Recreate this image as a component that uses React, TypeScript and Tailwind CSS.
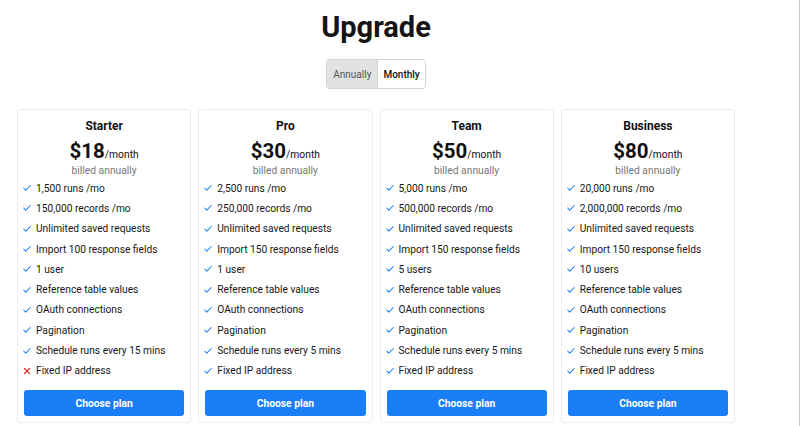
import { Check, X } from "lucide-react";

interface Plan {
  name: string;
  price: number;
  features: string[];
  ipIncluded: boolean;
}

const plans: Plan[] = [
  {
    name: "Starter",
    price: 18,
    features: [
      "1,500 runs /mo",
      "150,000 records /mo",
      "Unlimited saved requests",
      "Import 100 response fields",
      "1 user",
      "Reference table values",
      "OAuth connections",
      "Pagination",
      "Schedule runs every 15 mins",
    ],
    ipIncluded: false,
  },
  {
    name: "Pro",
    price: 30,
    features: [
      "2,500 runs /mo",
      "250,000 records /mo",
      "Unlimited saved requests",
      "Import 150 response fields",
      "1 user",
      "Reference table values",
      "OAuth connections",
      "Pagination",
      "Schedule runs every 5 mins",
    ],
    ipIncluded: true,
  },
  {
    name: "Team",
    price: 50,
    features: [
      "5,000 runs /mo",
      "500,000 records /mo",
      "Unlimited saved requests",
      "Import 150 response fields",
      "5 users",
      "Reference table values",
      "OAuth connections",
      "Pagination",
      "Schedule runs every 5 mins",
    ],
    ipIncluded: true,
  },
  {
    name: "Business",
    price: 80,
    features: [
      "20,000 runs /mo",
      "2,000,000 records /mo",
      "Unlimited saved requests",
      "Import 150 response fields",
      "10 users",
      "Reference table values",
      "OAuth connections",
      "Pagination",
      "Schedule runs every 5 mins",
    ],
    ipIncluded: true,
  },
];

function Feature({ text, ok = true }: { text: string; ok?: boolean }) {
  return (
    <li className="-ml-[2px] flex h-[20.33px] items-center gap-[4px]">
      {ok ? (
        <Check className="h-[10px] w-[10px] shrink-0 text-[#1a7ef7]" strokeWidth={2.5} />
      ) : (
        <X className="h-[10px] w-[10px] shrink-0 text-[#e8322d]" strokeWidth={3} />
      )}
      <span className="whitespace-nowrap">{text}</span>
    </li>
  );
}

function PlanCard({ plan }: { plan: Plan }) {
  return (
    <div className="flex flex-col rounded-[4px] border border-[#ececec] bg-white px-[6px] pt-[6px] pb-[6px]">
      <h2 className="text-center text-[12px] leading-[20px] font-bold text-[#111]">{plan.name}</h2>
      <div className="mt-[2px] flex h-[26px] items-baseline justify-center leading-[26px] text-[#111]">
        <span className="text-[20.5px] font-bold">${plan.price}</span>
        <span className="text-[10.3px]">/month</span>
      </div>
      <div className="text-center text-[10.3px] leading-[14px] text-[#777]">billed annually</div>
      <ul className="text-[10.2px] text-[#161616]">
        {plan.features.map((f) => (
          <Feature key={f} text={f} />
        ))}
        <Feature text="Fixed IP address" ok={plan.ipIncluded} />
      </ul>
      <button className="mt-[9px] h-[26px] rounded-[3px] bg-[#1a7ef7] text-[10.3px] font-bold text-white">
        Choose plan
      </button>
    </div>
  );
}

export default function App() {
  return (
    <div
      className="h-[426px] w-[800px] overflow-hidden border-r border-[#c8c8c8] bg-white text-[#1e1e1e]"
      style={{ fontFamily: "Roboto, 'Liberation Sans', sans-serif" }}
    >
      <div className="ml-[17px] w-[718px]">
        <h1 className="pt-[8px] text-center text-[29px] leading-[38px] font-bold text-[#141414]">Upgrade</h1>
        <div className="mt-[13px] flex justify-center">
          <div className="flex h-[30px] overflow-hidden rounded-[4px] border border-[#d2d2d2] text-[10px]">
            <span className="flex items-center border-r border-[#d2d2d2] bg-[#e2e2e2] px-[6px] text-[#555]">
              Annually
            </span>
            <span className="flex items-center bg-white px-[5px] font-medium text-[#111]">Monthly</span>
          </div>
        </div>
        <div className="mt-[20px] grid grid-cols-4 gap-[7px]">
          {plans.map((p) => (
            <PlanCard key={p.name} plan={p} />
          ))}
        </div>
      </div>
    </div>
  );
}
